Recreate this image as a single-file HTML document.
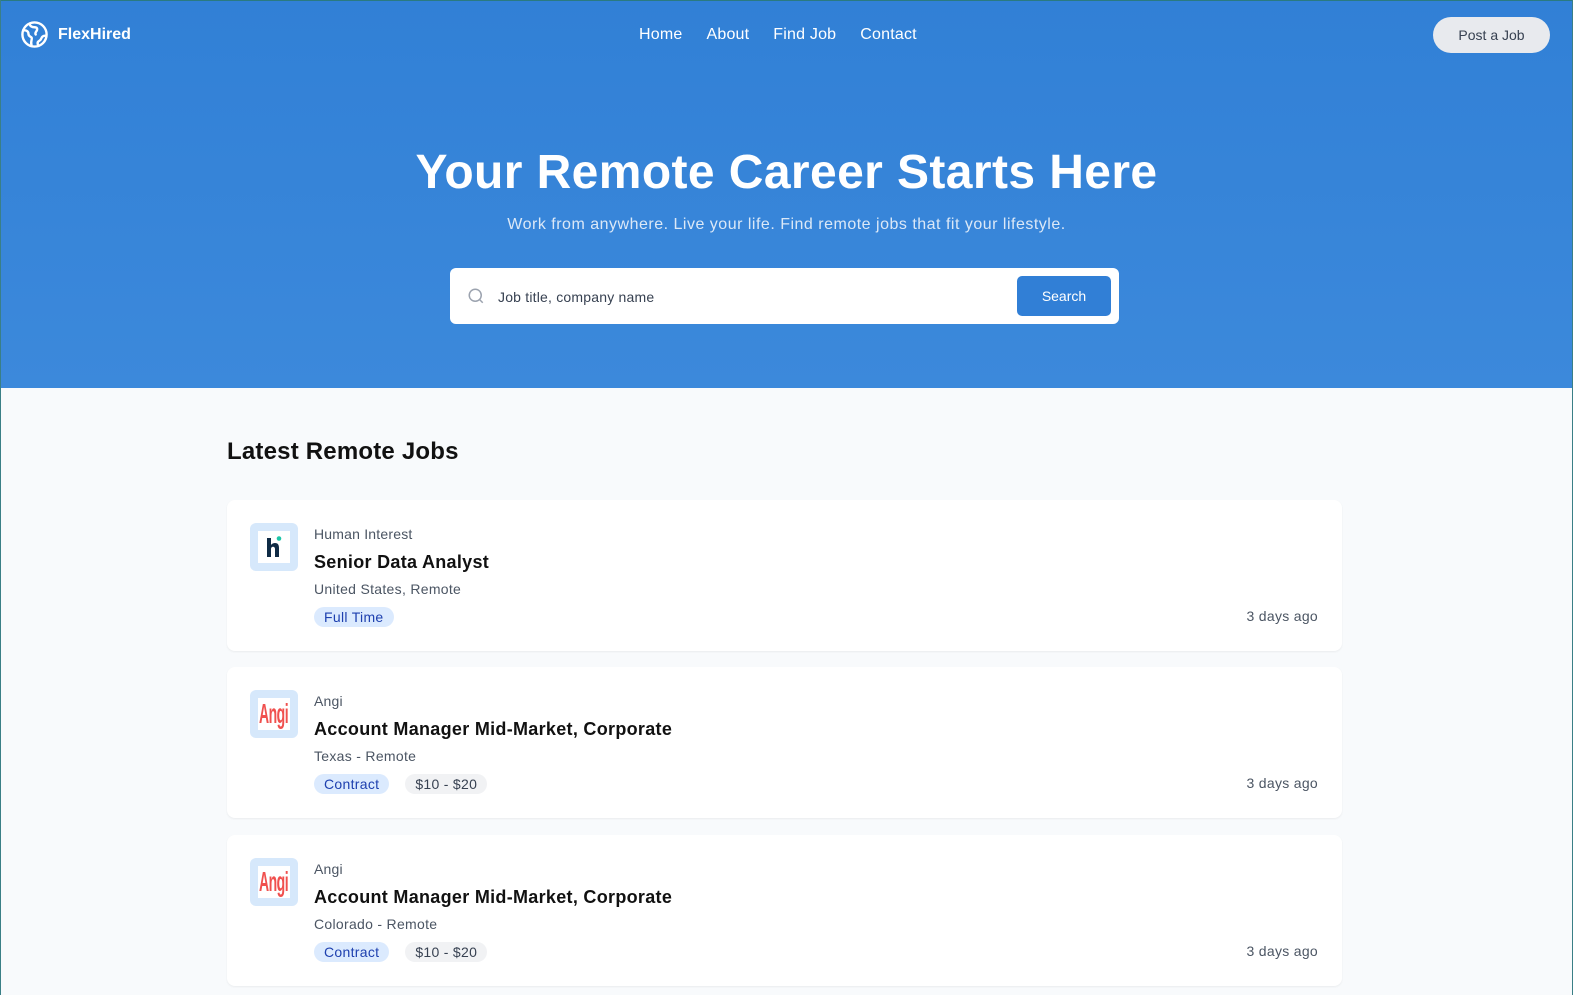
<!DOCTYPE html>
<html><head><meta charset="utf-8">
<style>
*{box-sizing:border-box;margin:0;padding:0}
body{width:1573px;height:995px;overflow:hidden;font-family:"Liberation Sans",sans-serif;background:#f8fafc;position:relative}
.frame{position:absolute;inset:0;box-shadow:inset 1px 0 0 #3a7f86,inset -1px 0 0 #3a7f86,inset 0 1px 0 #2a7a80;pointer-events:none;z-index:5}
.hero{height:388px;background:linear-gradient(#3180d6,#3c89db);position:relative}
.nav{position:absolute;top:0;left:0;right:0;height:70px}
.logo{position:absolute;left:20px;top:20px;display:flex;align-items:center;color:#fff;font-weight:bold;font-size:16px}
.logo span{margin-left:9px}
.links{position:absolute;left:639px;top:26px;color:#fff;font-size:16px;letter-spacing:.2px}
.links a{margin-right:24px}
.post{position:absolute;left:1433px;top:17px;width:117px;height:36px;border-radius:18px;background:#e8eaee;color:#374151;font-size:14px;text-align:center;line-height:36px}
h1{position:absolute;top:145px;width:100%;text-align:center;color:#fff;font-size:48px;font-weight:bold;letter-spacing:.4px}
.sub{position:absolute;top:216px;width:100%;text-align:center;color:#dbe8f7;font-size:16px;letter-spacing:.5px}
.search{position:absolute;left:450px;top:268px;width:669px;height:56px;background:#fff;border-radius:6px}
.search .ph{position:absolute;left:48px;top:21px;font-size:14px;color:#374151;letter-spacing:.2px}
.search .btn{position:absolute;left:567px;top:8px;width:94px;height:40px;background:#317fd6;border-radius:5px;color:#fff;font-size:14px;text-align:center;line-height:40px}
.search svg{position:absolute;left:17px;top:19px}
h2{position:absolute;left:227px;top:438px;font-size:24px;font-weight:600;color:#111;letter-spacing:.2px}
.card{position:absolute;left:227px;width:1115px;height:151px;background:#fff;border-radius:8px;box-shadow:0 1px 2px rgba(0,0,0,.06)}
.lg{position:absolute;left:23px;top:23px;width:48px;height:48px;border-radius:6px;background:#d6e8fb}
.lg .in{position:absolute;left:8px;top:8px;width:32px;height:32px;background:#fff;overflow:hidden}
.co{position:absolute;left:87px;top:26px;font-size:14px;color:#4b5563;letter-spacing:.2px}
.ti{position:absolute;left:87px;top:52px;font-size:18px;font-weight:bold;color:#111;letter-spacing:.3px}
.lo{position:absolute;left:87px;top:81px;font-size:14px;color:#4b5563;letter-spacing:.3px}
.tags{position:absolute;left:87px;top:107px;display:flex}
.tag{height:20px;line-height:20px;padding:0 10px;border-radius:10px;font-size:14px;margin-right:16px;letter-spacing:.3px}
.b{background:#dbeafe;color:#1e40af}
.g{background:#f1f2f4;color:#374151}
.ago{position:absolute;right:24px;top:108px;font-size:14px;color:#4b5563;letter-spacing:.3px}
.angi{color:#f0504e;font-weight:bold;font-size:28px;font-family:"Liberation Sans Narrow","Liberation Sans",sans-serif;transform:scaleX(.5);transform-origin:0 0;position:absolute;left:1px;top:0;letter-spacing:-1px;white-space:nowrap}
</style></head><body>
<div class="frame"></div>
<div class="hero">
<div class="nav">
<div class="logo"><svg width="29" height="29" viewBox="0 0 24 24" fill="none" stroke="#fff" stroke-width="2" stroke-linecap="round" stroke-linejoin="round"><circle cx="12" cy="12" r="10"/><path d="M3.5 8.5c2 0 3.5 1 3.5 3s1.5 2 2.5 3-1 3.5 0 6"/><path d="M21 13c-2 0-3 1-3.5 2.5S16 17 15 18s0 2.5 0 3"/><path d="M8 3.5c.5 1.5 2 2.5 4 2.5s2.5 1 2 2.5-2 2-1 3.5"/></svg><span>FlexHired</span></div>
<div class="links"><a>Home</a><a>About</a><a>Find Job</a><a>Contact</a></div>
<div class="post">Post a Job</div>
</div>
<h1>Your Remote Career Starts Here</h1>
<div class="sub">Work from anywhere. Live your life. Find remote jobs that fit your lifestyle.</div>
<div class="search"><svg width="18" height="18" viewBox="0 0 24 24" fill="none" stroke="#9ca3af" stroke-width="2"><circle cx="11" cy="11" r="8"/><path d="M21 21l-4.3-4.3"/></svg><div class="ph">Job title, company name</div><div class="btn">Search</div></div>
</div>
<h2>Latest Remote Jobs</h2>
<div class="card" style="top:500px"><div class="lg"><div class="in"><svg width="32" height="32" viewBox="0 0 32 32"><path d="M9 7h4v7c1-1.5 2.5-2 4-2 3 0 4 2 4 5v9h-4v-8c0-1.5-.8-2.3-2-2.3s-2 .8-2 2.3v8H9z" fill="#0f2b45"/><circle cx="21" cy="7.5" r="2.3" fill="#1cc5a8"/></svg></div></div>
<div class="co">Human Interest</div><div class="ti">Senior Data Analyst</div><div class="lo">United States, Remote</div><div class="tags"><div class="tag b">Full Time</div></div><div class="ago">3 days ago</div></div>
<div class="card" style="top:667px"><div class="lg"><div class="in"><div class="angi">Angi</div></div></div>
<div class="co">Angi</div><div class="ti">Account Manager Mid-Market, Corporate</div><div class="lo">Texas - Remote</div><div class="tags"><div class="tag b">Contract</div><div class="tag g">$10 - $20</div></div><div class="ago">3 days ago</div></div>
<div class="card" style="top:835px"><div class="lg"><div class="in"><div class="angi">Angi</div></div></div>
<div class="co">Angi</div><div class="ti">Account Manager Mid-Market, Corporate</div><div class="lo">Colorado - Remote</div><div class="tags"><div class="tag b">Contract</div><div class="tag g">$10 - $20</div></div><div class="ago">3 days ago</div></div>
</body></html>
